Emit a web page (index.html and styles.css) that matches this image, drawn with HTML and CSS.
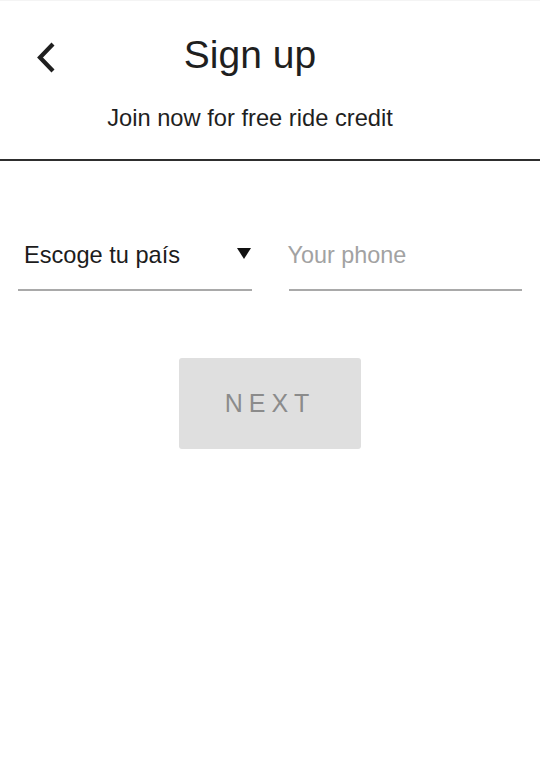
FILE: index.html
```html
<!DOCTYPE html>
<html lang="en">
<head>
<meta charset="utf-8">
<title>Sign up</title>
<link rel="stylesheet" href="styles.css">
</head>
<body>
<div class="screen">
  <header class="header">
    <div class="header-row">
      <button class="back" aria-label="Back">
        <svg width="22" height="34" viewBox="0 0 22 34" aria-hidden="true">
          <polyline points="18,3 5,16.5 18,30" fill="none" stroke="#1f1f1f" stroke-width="4.2" stroke-linejoin="miter"/>
        </svg>
      </button>
      <h1 class="title">Sign up</h1>
      <span class="spacer"></span>
    </div>
    <p class="subtitle">Join now for free ride credit</p>
  </header>
  <main class="form">
    <div class="fields">
      <div class="field select">
        <span class="select-label">Escoge tu país</span>
        <svg class="caret" width="14" height="11" viewBox="0 0 14 11" aria-hidden="true">
          <polygon points="0,0 14,0 7,11" fill="#111"/>
        </svg>
      </div>
      <div class="field">
        <span class="placeholder">Your phone</span>
      </div>
    </div>
    <div class="actions">
      <button class="next">NEXT</button>
    </div>
  </main>
</div>
</body>
</html>
```

FILE: styles.css
```css
* { box-sizing: border-box; }
html, body {
  margin: 0;
  padding: 0;
  background: #ffffff;
}
body {
  font-family: "Liberation Sans", Arial, sans-serif;
  color: #1f1f1f;
}
.screen {
  width: 540px;
  min-height: 762px;
  border-top: 1px solid #f4f4f4;
}
.header {
  padding: 30.5px 40px 0 0;
  border-bottom: 2px solid #2e2e2e;
}
.header-row {
  display: grid;
  grid-template-columns: 1fr auto 1fr;
  align-items: center;
}
.back {
  justify-self: start;
  margin: 6px 0 0 35px;
  padding: 0;
  border: 0;
  background: none;
  display: flex;
}
.title {
  margin: 0;
  font-size: 39px;
  line-height: 46px;
  font-weight: 400;
  color: #1f1f1f;
}
.subtitle {
  margin: 26px 0 0;
  padding-bottom: 27px;
  text-align: center;
  font-size: 23.7px;
  line-height: 28px;
  color: #1f1f1f;
}
.form {
  padding: 80px 18px 0;
}
.fields {
  display: grid;
  grid-template-columns: 1fr 1fr;
  column-gap: 37px;
}
.field {
  display: flex;
  align-items: center;
  padding: 0 0 20px;
  border-bottom: 2px solid #a9a9a9;
  font-size: 23.4px;
  line-height: 28px;
}
.select {
  justify-content: space-between;
  padding-left: 6px;
}
.select-label {
  color: #1c1c1c;
  font-size: 23.6px;
}
.caret {
  margin: 0 1px 2px 0;
}
.placeholder {
  color: #a2a2a2;
  margin-left: -1px;
}
.actions {
  display: flex;
  justify-content: center;
  padding-top: 67px;
}
.next {
  width: 182px;
  height: 91px;
  border: 0;
  border-radius: 3px;
  background: #dfdfdf;
  color: #8b8b8b;
  font-family: "Liberation Sans", Arial, sans-serif;
  font-size: 25px;
  letter-spacing: 6px;
  padding: 0;
}
```
